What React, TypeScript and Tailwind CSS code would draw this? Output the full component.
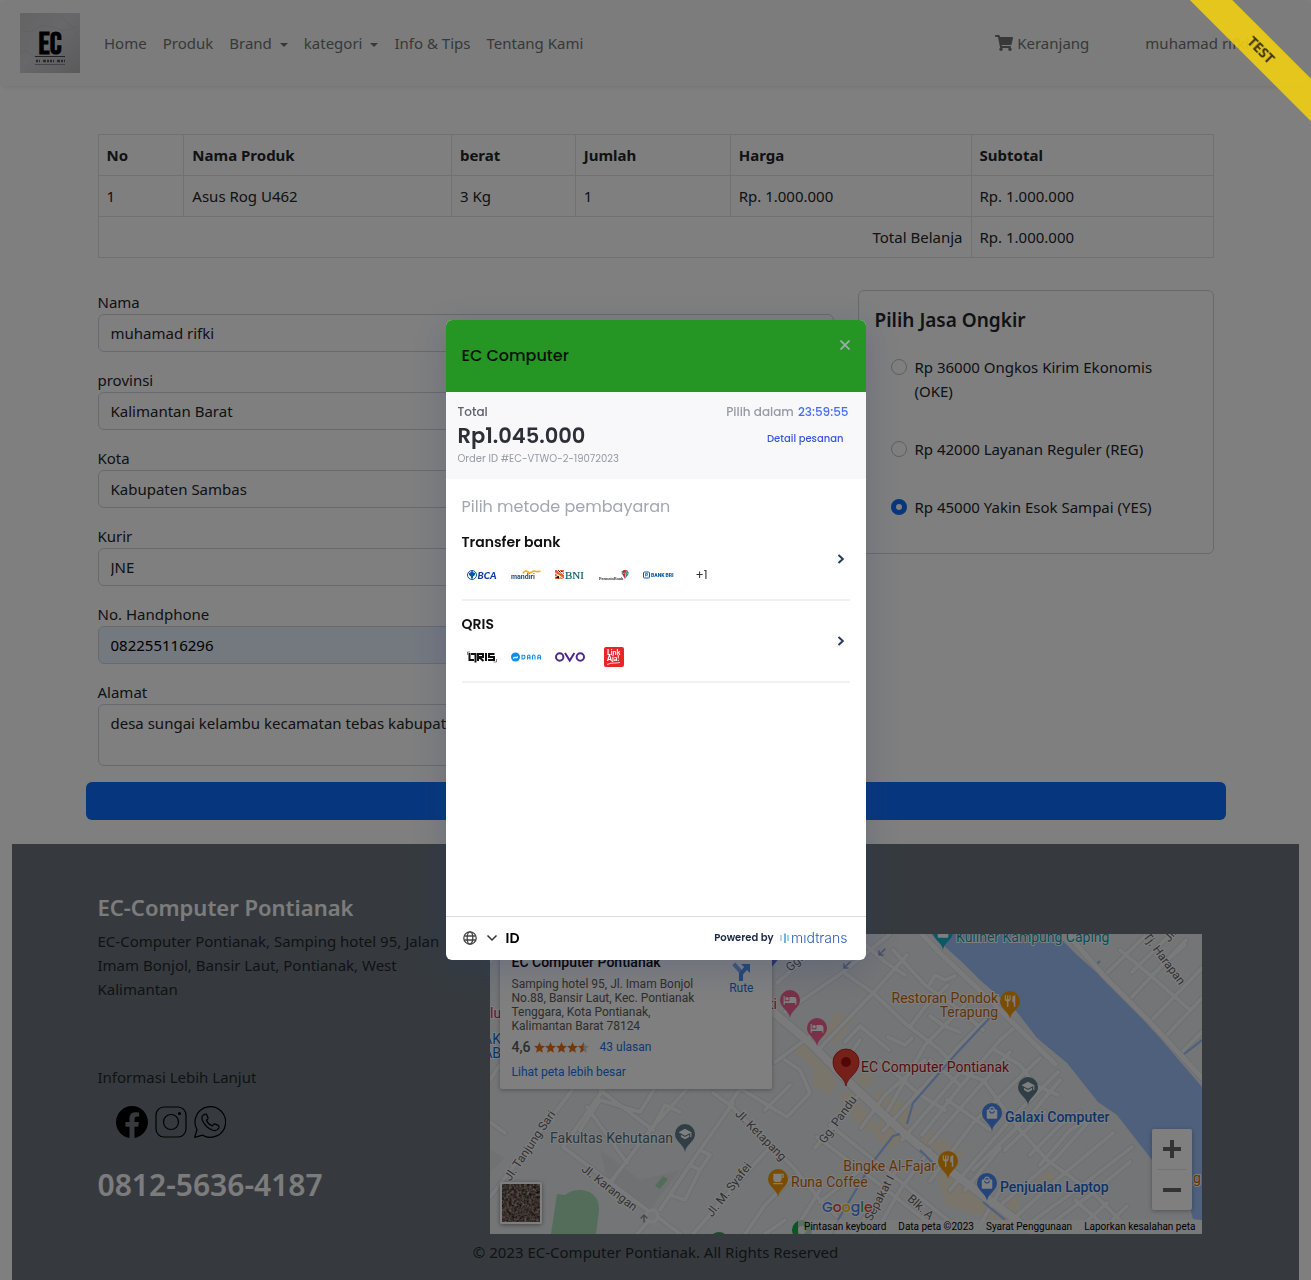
import type { ReactNode } from "react";
import { FaShoppingCart } from "react-icons/fa";
import { BsFacebook } from "react-icons/bs";
import { MdHotel, MdRestaurant, MdSchool, MdLocalMall, MdLocalCafe } from "react-icons/md";

/* ---------- Navbar ---------- */

function Caret() {
  return <span className="ml-2 inline-block border-x-4 border-t-4 border-x-transparent border-t-[#707172] align-middle" />;
}

function BrandMark() {
  return (
    <svg viewBox="0 0 60 60" className="size-[60px]" role="img" aria-label="EC Computer">
      <defs>
        <linearGradient id="marble" x1="0" y1="0" x2="1" y2="1">
          <stop offset="0" stopColor="#c8c8ca" />
          <stop offset="0.45" stopColor="#d0d0d4" />
          <stop offset="1" stopColor="#b6b6b8" />
        </linearGradient>
      </defs>
      <rect width="60" height="60" fill="url(#marble)" />
      <g fill="none" stroke="#bebec2" strokeWidth="0.7">
        <path d="M3 18C14 22 17 10 29 13S44 22 58 12" />
        <path d="M0 40C8 34 12 44 22 50" />
        <path d="M40 2C44 9 52 8 57 24" />
      </g>
      <text x="30" y="41" textAnchor="middle" fontFamily="'Bebas Neue', 'Oswald', 'Roboto Condensed', 'Roboto', sans-serif" fontSize="31" fontWeight="700" fill="#000">
        EC
      </text>
      <path d="M15 43.500H45" stroke="#444" />
      <path d="M16 48H45" stroke="#555" strokeWidth="2.500" strokeDasharray="2 1 1 3 3 1 2 1" />
      <path d="M15 51.500H45" stroke="#888" />
    </svg>
  );
}

function Navbar() {
  return (
    <nav className="flex h-[86px] items-center rounded-lg bg-[#f8f9fa] px-5 text-[15px] text-[#707172] shadow-[0_2px_4px_rgba(0,0,0,0.08)]">
      <a href="#beranda" className="mr-4 shrink-0">
        <BrandMark />
      </a>
      <div className="flex">
        <a href="#home" className="px-2">Home</a>
        <a href="#produk" className="px-2">Produk</a>
        <button type="button" className="px-2">Brand<Caret /></button>
        <button type="button" className="px-2">kategori<Caret /></button>
        <a href="#info" className="px-2">Info &amp; Tips</a>
        <a href="#tentang" className="px-2">Tentang Kami</a>
      </div>
      <div className="mr-[26px] ml-auto flex items-center gap-14">
        <a href="#keranjang" className="flex items-center gap-1">
          <FaShoppingCart size={18} />
          Keranjang
        </a>
        <button type="button">muhamad rifki<Caret /></button>
      </div>
    </nav>
  );
}

/* ---------- Order table ---------- */

const cell = "border border-[#dee2e6] px-2 py-2";

function OrderTable() {
  return (
    <table className="w-full table-fixed border-collapse text-left">
      <colgroup>
        <col className="w-[7.7%]" />
        <col className="w-[24%]" />
        <col className="w-[11.1%]" />
        <col className="w-[13.9%]" />
        <col className="w-[21.6%]" />
        <col />
      </colgroup>
      <thead>
        <tr>
          {["No", "Nama Produk", "berat", "Jumlah", "Harga", "Subtotal"].map((h) => (
            <th key={h} className="border border-[#dee2e6] px-2 py-2 font-bold">{h}</th>
          ))}
        </tr>
      </thead>
      <tbody>
        <tr>
          <td className={cell}>1</td>
          <td className={cell}>Asus Rog U462</td>
          <td className={cell}>3 Kg</td>
          <td className={cell}>1</td>
          <td className={cell}>Rp. 1.000.000</td>
          <td className={cell}>Rp. 1.000.000</td>
        </tr>
        <tr>
          <td colSpan={5} className="border border-[#dee2e6] px-2 py-2 text-right">Total Belanja</td>
          <td className={cell}>Rp. 1.000.000</td>
        </tr>
      </tbody>
    </table>
  );
}

/* ---------- Shipping form ---------- */

const fields = [
  { id: "nama", label: "Nama", value: "muhamad rifki" },
  { id: "provinsi", label: "provinsi", value: "Kalimantan Barat" },
  { id: "kota", label: "Kota", value: "Kabupaten Sambas" },
  { id: "kurir", label: "Kurir", value: "JNE" },
  { id: "hp", label: "No. Handphone", value: "082255116296", filled: true },
];

const couriers = [
  "Rp 36000 Ongkos Kirim Ekonomis (OKE)",
  "Rp 42000 Layanan Reguler (REG)",
  "Rp 45000 Yakin Esok Sampai (YES)",
];

function CheckoutForm() {
  return (
    <form className="mt-8">
      <div className="grid grid-cols-3 items-start gap-6 px-3">
        <div className="col-span-2 flex flex-col gap-4">
          {fields.map((f) => (
            <div key={f.id}>
              <label htmlFor={f.id} className="block">{f.label}</label>
              <input
                id={f.id}
                defaultValue={f.value}
                className={
                  f.filled
                    ? "block h-[38px] w-full rounded-md border border-[#ced4da] bg-[#e8f0fe] px-3 text-black"
                    : "block h-[38px] w-full rounded-md border border-[#ced4da] bg-white px-3"
                }
              />
            </div>
          ))}
          <div>
            <label htmlFor="alamat" className="block">Alamat</label>
            <textarea
              id="alamat"
              defaultValue="desa sungai kelambu kecamatan tebas kabupaten sambas"
              className="block h-[62px] w-full resize-none rounded-md border border-[#ced4da] bg-white px-3 py-1.5"
            />
          </div>
        </div>
        <fieldset className="rounded-md border border-[#ced4da] px-4 pt-4 pb-[17px]">
          <h5 className="mb-1 text-[19px] leading-[27px] font-semibold">Pilih Jasa Ongkir</h5>
          {couriers.map((c, i) => (
            <label key={c} className="flex gap-2 border border-transparent py-4 pr-4 pl-[15px]">
              <input
                type="radio"
                name="ongkir"
                defaultChecked={i === 2}
                className="mt-1 size-4 shrink-0 appearance-none rounded-full border border-[#bfbfbf] bg-white checked:border-[5px] checked:border-[#0d6efd]"
              />
              <span>{c}</span>
            </label>
          ))}
        </fieldset>
      </div>
      <button type="submit" aria-label="Bayar" className="mt-4 block h-[38px] w-full rounded-md bg-[#0d6efd]" />
    </form>
  );
}

/* ---------- Map ---------- */

const roads: string[] = [
  "777,983 833,934", "785,1012 843,972 890,934", "820,1048 873,993 907,955", "845,1042 860,1026 889,1050",
  "846,1060 860,1040", "910,1027 925,1007 948,985", "888,1110 925,1045 965,1005", "843,972 873,993 907,1025 940,1050 960,1072 983,1080",
  "893,950 925,985 960,1010 983,1030", "860,940 885,962 905,975", "861,1128 885,1095 925,1060", "883,1131 925,1085 960,1045 985,1020",
  "902,1140 945,1090 962,1070", "922,1135 960,1087 1000,1040 1014,1028", "930,1143 978,1088 1010,1052", "930,1181 973,1123 1017,1080 1040,1058",
  "950,1190 1010,1120 1058,1072", "973,1170 1033,1112 1060,1080", "888,1037 905,1045 912,1038", "930,1016 944,1026 960,1032",
  "930,984 935,975 945,980 955,976", "947,1100 965,1112 990,1130", "995,1050 1020,1065 1035,1085 1058,1095",
  "983,1080 1020,1130 1047,1160 1093,1193 1125,1225", "1003,1203 1057,1157 1093,1117", "1010,1222 1060,1177 1113,1133",
  "1023,1228 1080,1187 1132,1147", "1040,1232 1090,1195 1130,1162", "1030,1155 1060,1125 1080,1112", "1040,1165 1070,1130 1100,1112",
  "1077,1230 1107,1203", "1100,1232 1127,1206", "1075,1200 1100,1222", "965,1190 1000,1148", "1005,1150 1045,1112",
  "1105,975 1145,936", "1132,972 1175,930", "1152,976 1186,940", "1127,1002 1165,962 1185,945", "1150,1022 1202,968",
  "1165,1037 1202,998", "1180,1054 1202,1032", "1120,950 1150,975 1190,1010",
  "580,1080 490,1197", "610,1080 563,1147 647,1210", "587,1107 627,1163", "600,1090 653,1130", "610,1183 650,1130 695,1080",
  "580,1130 600,1100 640,1112 660,1080", "653,1127 665,1105 680,1112", "733,1103 693,1160 660,1210", "637,1234 655,1214",
  "655,1215 680,1234", "713,1093 730,1105 793,1167 820,1200 855,1234", "770,1147 740,1180 693,1234", "793,1177 765,1205 745,1234",
  "730,1103 750,1075", "743,1090 787,1117 810,1093 800,1070 785,1060", "765,1110 790,1085", "857,1097 815,1148",
  "817,1137 870,1177 930,1224", "830,1125 880,1165 960,1230", "900,1165 862,1222", "930,1150 900,1190 875,1234", "775,1062 812,1035",
  "670,1195 690,1165 700,1170 685,1200 670,1195", "700,1150 710,1155 700,1170", "490,1122 505,1133", "490,962 500,950", "490,1080 500,1065",
  "820,1190 798,1225", "860,1170 820,1202", "765,1234 785,1220", "1000,1190 975,1234", "930,1060 960,1085", "880,1060 920,1095 945,1110",
];

const blocks = [
  "836,1012 853,1020 835,1045 822,1035", "790,1048 815,1043 838,1068 828,1082", "815,1068 838,1082 830,1095 812,1085",
  "838,1095 850,1090 880,1130 862,1130", "862,1070 875,1078 868,1090 856,1082", "878,1088 915,1112 905,1126 872,1100",
  "885,1112 905,1135 890,1150 872,1135", "925,1130 965,1152 955,1165 922,1142", "935,1165 945,1160 1005,1215 1010,1225 945,1205",
  "1010,1193 1020,1198 1015,1217 1000,1212", "1047,1170 1057,1177 1045,1192 1035,1185",
];

type PinKind = "hotel" | "food" | "school" | "shop" | "cafe" | "plain";

const pins: { x: number; y: number; color: string; kind: PinKind }[] = [
  { x: 790, y: 1000, color: "#f06292", kind: "hotel" },
  { x: 817, y: 1028, color: "#f06292", kind: "hotel" },
  { x: 1010, y: 1001, color: "#f59b00", kind: "food" },
  { x: 948, y: 1161, color: "#f59b00", kind: "food" },
  { x: 778, y: 1179, color: "#f59b00", kind: "cafe" },
  { x: 1028, y: 1087, color: "#607d8b", kind: "school" },
  { x: 685, y: 1134, color: "#607d8b", kind: "school" },
  { x: 992, y: 1113, color: "#4b8af5", kind: "shop" },
  { x: 987, y: 1183, color: "#4b8af5", kind: "shop" },
  { x: 943, y: 932, color: "#12b5cb", kind: "shop" },
  { x: 769, y: 955, color: "#4b6fe5", kind: "plain" },
  { x: 802, y: 1230, color: "#1fa84c", kind: "plain" },
  { x: 719, y: 1242, color: "#1fa84c", kind: "plain" },
];

function PinGlyph({ kind, x, y }: { kind: PinKind; x: number; y: number }) {
  const p = { x: x - 7, y: y - 7, size: 14, color: "#fff" };
  if (kind === "hotel") return <MdHotel {...p} />;
  if (kind === "food") return <MdRestaurant {...p} />;
  if (kind === "school") return <MdSchool {...p} />;
  if (kind === "shop") return <MdLocalMall {...p} />;
  if (kind === "cafe") return <MdLocalCafe {...p} />;
  return null;
}

function Place({ x, y, fill, end, bold, children }: { x: number; y: number; fill: string; end?: boolean; bold?: boolean; children: ReactNode }) {
  return (
    <text x={x} y={y} fill={fill} textAnchor={end ? "end" : "start"} fontWeight={bold ? 500 : 400} fontSize="14" stroke="#fff" strokeWidth="2" paintOrder="stroke" strokeLinejoin="round">
      {children}
    </text>
  );
}

function Street({ x, y, turn, children }: { x: number; y: number; turn: number; children: ReactNode }) {
  return (
    <text x={x} y={y} fill="#5f6368" textAnchor="middle" fontSize="12" transform={`rotate(${turn} ${x} ${y})`} stroke="#fff" strokeWidth="2" paintOrder="stroke">
      {children}
    </text>
  );
}

function MapDrawing() {
  return (
    <svg viewBox="490 934 712 300" preserveAspectRatio="xMidYMid slice" className="block h-full w-full" fontFamily="Roboto, sans-serif" role="img" aria-label="Peta">
      <rect x="490" y="934" width="712" height="300" fill="#e8eaed" />
      <path d="M600 1150L640 1180L680 1170L650 1210L610 1190ZM490 1150L505 1158L490 1172Z" fill="#e0e3e7" />
      {blocks.map((b) => <polygon key={b} points={b} fill="#f3ebd6" />)}
      <path d="M551 1234L557 1194L565 1195C575 1186 600 1188 599 1210L596 1234Z" fill="#a8dab5" />
      <path d="M655 1186L663 1176L668 1179L660 1189ZM630 1150L636 1146L634 1150Z" fill="#a8dab5" />
      <g fill="none" strokeLinecap="round" strokeLinejoin="round">
        <g stroke="#d8dbdf" strokeWidth="5.500">{roads.map((r) => <polyline key={r} points={r} />)}</g>
        <g stroke="#d8dbdf" strokeWidth="10">
          <path d="M740 980L773 1012L810 1043L850 1083L900 1130L953 1173L1035 1234" />
        </g>
        <g stroke="#f4f5f6" strokeWidth="3.800">{roads.map((r) => <polyline key={r} points={r} />)}</g>
        <path d="M740 980L773 1012L810 1043L850 1083L900 1130L953 1173L1035 1234" stroke="#f4f5f6" strokeWidth="8" />
        <circle cx="652" cy="1216" r="6" stroke="#f4f5f6" strokeWidth="3" fill="#e8eaed" />
        <path d="M644 1222V1215M641 1218L644 1215L647 1218" stroke="#8a93a0" strokeWidth="1.500" />
        <path d="M885 949L879 955M879 951V955H883M850 962L844 968M844 964V968H848" stroke="#8f9fd0" strokeWidth="1.500" />
      </g>
      <path d="M995 1012L955 1055L913 1103L907 1124M900 1134L893 1136L872 1163L838 1220L833 1234M920 1150L935 1165M983 1202L1005 1220M1095 966L1100 961M1183 1055L1202 1040" fill="none" stroke="#9cc0f9" strokeWidth="2.200" />
      <path d="M931 934L963 963L980 980L1017 1012L1037 1038L1067 1063L1098 1102L1117 1115L1152 1160L1190 1208L1193 1219L1202 1220V1087L1160 1038L1127 1002L1103 978L1077 955L1062 940L1060 934Z" fill="#9cc0f9" />
      <g fill="none" strokeLinecap="round" strokeLinejoin="round">
        <path d="M918 930L940 953L993 1003L1017 1027L1055 1064M1064 930L1085 954L1105 977L1150 1022L1202 1078" stroke="#d8dbdf" strokeWidth="6.500" />
        <path d="M918 930L940 953L993 1003L1017 1027L1055 1064M1064 930L1085 954L1105 977L1150 1022L1202 1078" stroke="#f4f5f6" strokeWidth="5" />
      </g>

      <Street x={533} y={1148} turn={-56}>Jl. Tanjung Sari</Street>
      <Street x={607} y={1191} turn={38}>Jl. Karangan</Street>
      <Street x={758} y={1138} turn={45}>Jl. Ketapang</Street>
      <Street x={732} y={1192} turn={-52}>Jl. M. Syafei</Street>
      <Street x={841} y={1122} turn={-54}>Gg. Pandu</Street>
      <Street x={883} y={1200} turn={-62}>Sepakat I</Street>
      <Street x={918} y={1210} turn={42}>Blk. A</Street>
      <Street x={797} y={966} turn={-42}>Gg.</Street>
      <Street x={1161} y={961} turn={53}>Tj. Harapan</Street>
      <Street x={1173} y={938} turn={-50}>Jl.</Street>

      {pins.map((p) => (
        <g key={`${p.x}-${p.y}`}>
          <path
            d={`M${p.x} ${p.y + 18}C${p.x - 1} ${p.y + 10} ${p.x - 10} ${p.y + 8} ${p.x - 10} ${p.y}A10 10 0 1 1 ${p.x + 10} ${p.y}C${p.x + 10} ${p.y + 8} ${p.x + 1} ${p.y + 10} ${p.x} ${p.y + 18}Z`}
            fill={p.color}
          />
          <PinGlyph kind={p.kind} x={p.x} y={p.y} />
        </g>
      ))}
      <circle cx="802" cy="1230" r="4" fill="#fff" />
      <path d="M846 1086C845 1077 833 1074 833 1062A13 13 0 1 1 859 1062C859 1074 847 1077 846 1086Z" fill="#ea4335" stroke="#b31412" strokeWidth="0.800" />
      <circle cx="846" cy="1062" r="5" fill="#a50e0e" />

      <Place x={956} y={942} fill="#129ba8">Kuliner Kampung Caping</Place>
      <Place x={998} y={1003} fill="#c5690a" end>Restoran Pondok</Place>
      <Place x={998} y={1017} fill="#c5690a" end>Terapung</Place>
      <Place x={861} y={1072} fill="#b3151c">EC Computer Pontianak</Place>
      <Place x={1005} y={1122} fill="#1967d2" bold>Galaxi Computer</Place>
      <Place x={1000} y={1192} fill="#1967d2" bold>Penjualan Laptop</Place>
      <Place x={936} y={1171} fill="#c5690a" end>Bingke Al-Fajar</Place>
      <Place x={791} y={1187} fill="#c5690a">Runa Coffee</Place>
      <Place x={673} y={1143} fill="#546e7a" end>Fakultas Kehutanan</Place>
      <Place x={777} y={1009} fill="#d81b60" end>ti</Place>
      <Place x={490} y={1018} fill="#d81b60">lu</Place>
      <Place x={501} y={1044} fill="#1967d2" end>AK</Place>
      <Place x={501} y={1058} fill="#1967d2" end>AB</Place>
      <Place x={1193} y={1183} fill="#c5690a">g</Place>

      <text x="822" y="1212" fontSize="14" fontWeight="500" stroke="#fff" strokeWidth="2" paintOrder="stroke" fontFamily="Poppins, Lato, sans-serif">
        <tspan fill="#4285f4">G</tspan>
        <tspan fill="#ea4335">o</tspan>
        <tspan fill="#fbbc04">o</tspan>
        <tspan fill="#4285f4">g</tspan>
        <tspan fill="#34a853">l</tspan>
        <tspan fill="#ea4335">e</tspan>
      </text>
    </svg>
  );
}

function Star({ half }: { half?: boolean }) {
  return (
    <svg viewBox="0 0 24 24" className="size-[11px]" aria-hidden="true">
      <path d="M12 0L15.400 8L24 8.800L17.500 14.700L19.400 23.500L12 19L4.600 23.500L6.500 14.700L0 8.800L8.600 8Z" fill={half ? "#cfcfcf" : "#e7711b"} />
      {half && <path d="M12 0V19L4.600 23.500L6.500 14.700L0 8.800L8.600 8Z" fill="#e7711b" />}
    </svg>
  );
}

function MapCard() {
  return (
    <div className="absolute top-3 left-2.5 flex w-[272px] justify-between rounded-xs bg-white px-3 pt-2 pb-2.5 text-xs leading-[14px] text-[#5b5b5b] shadow-[0_1px_4px_rgba(0,0,0,0.3)]">
      <div>
        <div className="mb-[7px] text-sm leading-4 font-medium whitespace-nowrap text-black">EC Computer Pontianak</div>
        <p className="w-[190px]">Samping hotel 95, Jl. Imam Bonjol No.88, Bansir Laut, Kec. Pontianak Tenggara, Kota Pontianak, Kalimantan Barat 78124</p>
        <div className="mt-1.5 flex items-center">
          <span className="mr-[3px] text-sm leading-4 font-medium">4,6</span>
          <Star /><Star /><Star /><Star /><Star half />
          <a href="#ulasan" className="ml-[11px] text-[#1a73e8]">43 ulasan</a>
        </div>
        <a href="#peta" className="mt-2.5 block text-[#1a73e8]">Lihat peta lebih besar</a>
      </div>
      <a href="#rute" className="mr-1.5 flex flex-col items-center text-[#1a73e8]">
        <svg viewBox="0 0 24 30" className="h-[27px] w-6" aria-hidden="true">
          <path d="M12 30V20L4 11" fill="none" stroke="#7baaf7" strokeWidth="4.500" />
          <path d="M12 30V22L18 15" fill="none" stroke="#4a90e8" strokeWidth="4.500" />
          <path d="M12 11H22V21Z" fill="#4a90e8" />
        </svg>
        Rute
      </a>
    </div>
  );
}

function SatelliteThumb() {
  return (
    <button type="button" aria-label="Citra satelit" className="absolute bottom-2.5 left-2.5 size-[42px] overflow-hidden rounded-xs border-2 border-white shadow-[0_1px_4px_rgba(0,0,0,0.4)]">
      <svg viewBox="0 0 38 38" className="block size-full">
        <defs>
          <filter id="terrain" colorInterpolationFilters="sRGB">
            <feTurbulence type="fractalNoise" baseFrequency="0.4" numOctaves="3" seed="4" />
            <feColorMatrix values="0.9 0.3 0 0 -0.16  0.7 0.45 0 0 -0.2  0.6 0.4 0.1 0 -0.2  0 0 0 0 1" />
          </filter>
        </defs>
        <rect width="38" height="38" filter="url(#terrain)" />
      </svg>
    </button>
  );
}

function MapPanel() {
  return (
    <div className="relative h-[300px] overflow-hidden font-['Roboto',sans-serif]">
      <MapDrawing />
      <MapCard />
      <SatelliteThumb />
      <div className="absolute right-2.5 bottom-6 w-10 rounded-xs bg-white px-[5px] shadow-[0_1px_4px_rgba(0,0,0,0.3)]">
        <button type="button" aria-label="Perbesar" className="flex h-[41px] w-full items-center justify-center border-b border-[#e6e6e6]">
          <svg viewBox="0 0 18 18" className="size-[18px]"><path d="M9 0V18M0 9H18" stroke="#666" strokeWidth="4" /></svg>
        </button>
        <button type="button" aria-label="Perkecil" className="flex h-10 w-full items-center justify-center">
          <svg viewBox="0 0 18 18" className="size-[18px]"><path d="M0 9H18" stroke="#666" strokeWidth="4" /></svg>
        </button>
      </div>
      <div className="absolute right-0 bottom-0 flex h-3.5 items-center gap-3 bg-[#f5f5f5]/70 px-1.5 text-[10px] text-black">
        <button type="button">Pintasan keyboard</button>
        <span>Data peta ©2023</span>
        <a href="#syarat">Syarat Penggunaan</a>
        <a href="#lapor">Laporkan kesalahan peta</a>
      </div>
    </div>
  );
}

/* ---------- Footer ---------- */

function InstagramOutline() {
  return (
    <svg viewBox="0 0 32 32" className="size-8" fill="none" stroke="#000" strokeWidth="1.200">
      <rect x="1" y="1" width="30" height="30" rx="8" />
      <circle cx="16" cy="16" r="7.500" />
      <circle cx="24.500" cy="7.500" r="1" fill="#000" />
    </svg>
  );
}

function WhatsappOutline() {
  return (
    <svg viewBox="0 0 32 32" className="size-8" fill="none" stroke="#000" strokeWidth="1.200" strokeLinejoin="round">
      <path d="M0.700 31.300L3 23.500A15.300 15.300 0 1 1 8.600 29.200Z" />
      <path d="M10.500 8.300C8.300 9.400 7.300 11.600 8.400 14.200C10.300 18.800 13.800 22.200 18.300 24C21 25 23.600 24.300 24.800 22C25.300 20.800 25.100 19.900 24.200 19.400L21.200 18.100C20.400 17.800 19.800 18 19.300 18.700L18.300 20C15.700 19 13.600 17 12.400 14.300L13.600 13.200C14.100 12.600 14.200 12 13.900 11.300L12.700 8.800C12.300 8 11.500 7.800 10.500 8.300Z" />
    </svg>
  );
}

function Footer() {
  return (
    <footer className="mx-3 mt-6 bg-[#6c757d] pt-12 pb-4">
      <div className="mx-auto grid max-w-[1140px] grid-cols-3 gap-6 px-3">
        <div>
          <h4 className="mb-1.5 text-[22px] leading-[31px] font-semibold text-[#f8f9fa]">EC-Computer Pontianak</h4>
          <p>EC-Computer Pontianak, Samping hotel 95, Jalan Imam Bonjol, Bansir Laut, Pontianak, West Kalimantan</p>
          <p className="mt-16">Informasi Lebih Lanjut</p>
          <div className="mt-[17px] ml-[18px] flex gap-[7px] text-black">
            <a href="#facebook" aria-label="Facebook"><BsFacebook size={32} /></a>
            <a href="#instagram" aria-label="Instagram"><InstagramOutline /></a>
            <a href="#whatsapp" aria-label="WhatsApp"><WhatsappOutline /></a>
          </div>
          <h2 className="mt-7 text-[30px] leading-[38px] font-semibold text-[#f8f9fa]">0812-5636-4187</h2>
        </div>
        <div className="col-span-2 px-3 pt-[42px]">
          <MapPanel />
        </div>
      </div>
      <p className="mt-1.5 text-center">© 2023 EC-Computer Pontianak. All Rights Reserved</p>
    </footer>
  );
}

/* ---------- Payment dialog ---------- */

const logo = "h-5 w-[30px] overflow-visible";

function BcaLogo() {
  return (
    <svg viewBox="0 0 30 20" className={logo} role="img" aria-label="BCA">
      <circle cx="5" cy="10" r="4.500" fill="none" stroke="#0b57a5" />
      <path d="M5 5.500L6.500 7.500L8.500 8L7.500 10.500L6 11.500V13.500H4V11.500L2.500 10.500L1.500 8L3.500 7.500Z" fill="#0b57a5" />
      <text x="10.500" y="13.500" fontSize="10" fontWeight="900" fontStyle="italic" fill="#0b3fa0" fontFamily="Lato, sans-serif">BCA</text>
    </svg>
  );
}

function MandiriLogo() {
  return (
    <svg viewBox="0 0 30 20" className={logo} role="img" aria-label="Mandiri">
      <text x="0" y="14" fontSize="7" fontWeight="700" fill="#1b4f80" fontFamily="Roboto, sans-serif">mandiri</text>
      <path d="M12 8.500C14 5.500 15 5.500 17 7S20 8 21.500 6.500S25 8 29.500 6" fill="none" stroke="#f5ad1c" strokeWidth="1.600" />
    </svg>
  );
}

function BniLogo() {
  return (
    <svg viewBox="0 0 30 20" className={logo} role="img" aria-label="BNI">
      <rect x="0" y="5" width="9" height="9" fill="#e8622a" />
      <path d="M0 8L9 14M2 5L5 8L9 7M0 12L4 10L5 14M4 5L9 10" stroke="#fff" strokeWidth="0.900" />
      <text x="10" y="14" fontSize="11" fill="#125e6b" stroke="#125e6b" strokeWidth="0.200" fontFamily="'Liberation Serif', serif">BNI</text>
    </svg>
  );
}

function PermataLogo() {
  return (
    <svg viewBox="0 0 30 20" className={logo} role="img" aria-label="PermataBank">
      <text x="0" y="14.500" fontSize="4.500" fill="#333" stroke="#333" strokeWidth="0.100" fontFamily="'Liberation Serif', serif">PermataBank</text>
      <path d="M22 7L25 5L26 9Z" fill="#1c7c4a" />
      <path d="M24.500 5H28L26 9.500Z" fill="#d7263d" />
      <path d="M28 5L30 8L26.500 9.500Z" fill="#1aa06a" />
      <path d="M22.500 8L26 14L26.500 9Z" fill="#c62f3f" />
      <path d="M30 8.500L26 14L27 9.500Z" fill="#217f93" />
    </svg>
  );
}

function BriLogo() {
  return (
    <svg viewBox="0 0 30 20" className={logo} role="img" aria-label="Bank BRI">
      <rect x="0.500" y="7" width="6" height="6" rx="1" fill="none" stroke="#0b5fa8" />
      <path d="M2.500 8.500V11.500M2.500 8.500H4.500V10H2.500M3.500 10L5 11.500" stroke="#0b5fa8" strokeWidth="0.700" fill="none" />
      <text x="8" y="12" fontSize="5" fontWeight="900" fill="#0b5fa8" fontFamily="Roboto, sans-serif">BANK BRI</text>
    </svg>
  );
}

function QrisLogo() {
  return (
    <svg viewBox="0 0 30 20" className={logo} role="img" aria-label="QRIS">
      <path d="M0.500 8V5H3M29.500 12V15H26.500" fill="none" stroke="#555" strokeWidth="0.700" />
      <g fill="none" stroke="#111" strokeWidth="2">
        <path d="M2.500 6V13H7M4 7H8.500V15.500" />
        <path d="M11 14V7H16V10H12L16.500 14" />
        <path d="M19 6V14" />
        <path d="M27.500 7H22V10H27V13H21" />
      </g>
    </svg>
  );
}

function DanaLogo() {
  return (
    <svg viewBox="0 0 30 20" className={logo} role="img" aria-label="DANA">
      <circle cx="4.500" cy="10" r="4.500" fill="#118eea" />
      <path d="M2 11C3.500 8.500 5.500 11 7 9V10.500C5.500 12.500 3.500 10 2 12Z" fill="#fff" />
      <g fill="none" stroke="#118eea" strokeWidth="1.100">
        <path d="M11 8.200H12.500C14.500 8.200 14.500 12 12.500 12H11Z" />
        <path d="M16.500 12.500V9.500C16.500 7.500 19 7.500 19 9.500V12.500M16.500 10.800H19" />
        <path d="M21.500 12.500V9.500C21.500 7.500 24 7.500 24 9.500V12.500" />
        <path d="M26.800 12.500V9.500C26.800 7.500 29.500 7.500 29.500 9.500V12.500M26.800 10.800H29.500" />
      </g>
    </svg>
  );
}

function OvoLogo() {
  return (
    <svg viewBox="0 0 30 20" className={logo} role="img" aria-label="OVO" fill="none" stroke="#4c2a86" strokeWidth="2">
      <circle cx="4.700" cy="10" r="3.700" />
      <path d="M10 6L14.700 13.500L19.400 6" />
      <circle cx="25.300" cy="10" r="3.700" />
    </svg>
  );
}

function LinkAjaLogo() {
  return (
    <svg viewBox="0 0 30 20" className={logo} role="img" aria-label="LinkAja">
      <rect x="5" y="0" width="20" height="20" rx="2" fill="#e82529" />
      <g fill="#fff" fontFamily="Lato, sans-serif" fontSize="7" fontWeight="900">
        <text x="8" y="8">Link</text>
        <text x="8" y="14">Aja!</text>
      </g>
      <path d="M8 17.500C12 15.500 17 16.500 21 15.500" stroke="#fff" strokeWidth="0.800" fill="none" />
    </svg>
  );
}

function Method({ title, children }: { title: string; children: ReactNode }) {
  return (
    <button type="button" className="flex h-[82px] w-full items-center justify-between border-b-2 border-[#f1f1f1] pr-[5px] text-left">
      <span className="block pb-0.5">
        <span className="block text-sm leading-5 font-semibold text-[#111]">{title}</span>
        <span className="mt-[13px] flex items-center gap-3.5 pl-[5px]">{children}</span>
      </span>
      <svg viewBox="0 0 8 12" className="h-3 w-2" aria-hidden="true">
        <path d="M1.500 2L5.800 6L1.500 10" fill="none" stroke="#2a3a5e" strokeWidth="2" />
      </svg>
    </button>
  );
}

function PaymentDialog() {
  return (
    <div role="dialog" aria-label="Pembayaran" className="flex h-[640px] w-[420px] flex-col overflow-hidden rounded-md bg-white font-['Poppins','Inter',sans-serif] shadow-[0_8px_36px_rgba(40,60,110,0.25)]">
      <header className="flex h-[72px] shrink-0 justify-between bg-[#259623] px-4">
        <h1 className="self-center text-base leading-6 font-medium text-[#0b0f0b]">EC Computer</h1>
        <button type="button" aria-label="Tutup" className="mt-5 size-2.5">
          <svg viewBox="0 0 10 10" className="size-2.5"><path d="M0.500 0.500L9.500 9.500M9.500 0.500L0.500 9.500" stroke="#a3a8b3" strokeWidth="1.800" /></svg>
        </button>
      </header>

      <section className="flex h-[87px] shrink-0 justify-between bg-[#f8f8fb] pt-3 pr-[17px] pl-3">
        <div>
          <div className="text-xs leading-4 font-medium text-[#5d6069]">Total</div>
          <div className="text-[21px] leading-8 font-semibold text-[#2c2f36]">Rp1.045.000</div>
          <div className="text-[10px] leading-[14px] text-[#969aa3]">Order ID #EC-VTWO-2-19072023</div>
        </div>
        <div className="text-right">
          <div className="text-xs leading-4 font-medium text-[#969aa3]">
            Pilih dalam <span className="ml-px text-[#4a6cf7]">23:59:55</span>
          </div>
          <button type="button" className="mt-[11px] block w-full pr-[5px] text-right text-[10px] leading-4 font-medium text-[#3a56e0]">Detail pesanan</button>
        </div>
      </section>

      <section className="grow px-4 pt-4">
        <h2 className="text-base leading-6 text-[#a3a6b3]">Pilih metode pembayaran</h2>
        <Method title="Transfer bank">
          <BcaLogo />
          <MandiriLogo />
          <BniLogo />
          <PermataLogo />
          <BriLogo />
          <span className="w-[30px] text-center text-xs text-[#333]">+1</span>
        </Method>
        <Method title="QRIS">
          <QrisLogo />
          <DanaLogo />
          <OvoLogo />
          <LinkAjaLogo />
        </Method>
      </section>

      <footer className="flex h-11 shrink-0 items-center border-t border-[#d5dde9] pr-[18px] pb-px pl-[17px]">
        <button type="button" className="flex items-center text-sm font-semibold text-black">
          <svg viewBox="0 0 14 14" className="size-3.5" fill="none" stroke="#444" strokeWidth="1.300" aria-hidden="true">
            <circle cx="7" cy="7" r="6.200" />
            <ellipse cx="7" cy="7" rx="2.800" ry="6.200" />
            <path d="M1.300 5H12.700M1.300 9H12.700" />
          </svg>
          <svg viewBox="0 0 12 8" className="mr-2 ml-[9px] h-2 w-3" fill="none" stroke="#333" strokeWidth="1.500" aria-hidden="true">
            <path d="M1.500 1.500L6 6L10.500 1.500" />
          </svg>
          ID
        </button>
        <span className="ml-auto text-[10px] font-semibold text-[#1c2747]">Powered by</span>
        <svg viewBox="0 0 68 16" className="ml-1.5 h-4 w-[68px]" role="img" aria-label="midtrans">
          <path d="M1 5V11M5 3V13" stroke="#8fb7e0" strokeWidth="1.200" />
          <path d="M5 4V13" stroke="#3b9fd8" strokeWidth="1.200" />
          <path d="M8 5V11" stroke="#3fc4d8" strokeWidth="1.200" />
          <text x="11" y="12.500" fontSize="14" fill="#2a5bb8" fontWeight="300" fontFamily="Inter, sans-serif">mıdtrans</text>
        </svg>
      </footer>
    </div>
  );
}

/* ---------- Page ---------- */

export default function App() {
  return (
    <div className="bg-white font-['Segoe_UI','Noto_Sans',sans-serif] text-[15px] leading-6 text-[#212529]">
      <Navbar />
      <main className="mx-auto mt-12 max-w-[1140px]">
        <div className="px-3">
          <OrderTable />
        </div>
        <CheckoutForm />
      </main>
      <Footer />

      <div className="fixed inset-0 flex items-center justify-center bg-black/50">
        <PaymentDialog />
      </div>
      <div className="pointer-events-none fixed top-0 right-0 size-36 overflow-hidden">
        <div className="absolute top-[35px] -right-[50px] flex h-[30px] w-[200px] rotate-45 items-center justify-center bg-[#f0cd12]/90 text-sm font-bold text-[#3a3210]">
          TEST
        </div>
      </div>
    </div>
  );
}
